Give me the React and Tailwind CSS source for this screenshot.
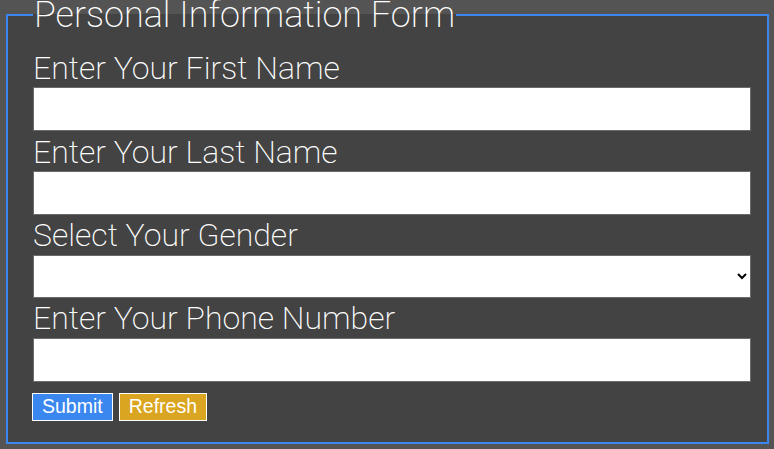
import React from 'react'

function Field({ label, children }) {
  return (
    <>
      <label className="block h-[33px] text-[32px] leading-[33px] font-extralight">{label}</label>
      {children}
    </>
  )
}

export default function App() {
  const inputCls =
    'block w-[718px] h-[44px] bg-white border border-[#6b6b6b] text-black text-base px-2 outline-none'

  return (
    <div className="h-screen w-full bg-[#545454] overflow-hidden" style={{ fontFamily: 'Roboto, "Noto Sans", sans-serif' }}>
      <fieldset className="ml-[6px] mt-[-3px] w-[763px] h-[447px] bg-[#434343] border-2 border-[#3b87f0] pl-[25px] text-white">
        <legend className="px-[1px] text-[36px] leading-[36px] font-extralight text-white">
          Personal Information Form
        </legend>
        <div className="flex flex-col pt-[19px]">
          <Field label="Enter Your First Name">
            <input type="text" className={inputCls + ' mt-[2px]'} />
          </Field>
          <div className="h-[5px]" />
          <Field label="Enter Your Last Name">
            <input type="text" className={inputCls + ' mt-[2px]'} />
          </Field>
          <div className="h-[4px]" />
          <Field label="Select Your Gender">
            <select className="block mt-[3px] w-[718px] h-[43px] bg-white border border-[#6b6b6b] text-black text-base pl-1">
              <option value=""></option>
              <option value="male">Male</option>
              <option value="female">Female</option>
            </select>
          </Field>
          <div className="h-[4px]" />
          <Field label="Enter Your Phone Number">
            <input type="tel" className={inputCls + ' mt-[3px]'} />
          </Field>
          <div className="flex gap-[6px] mt-[11px] ml-[-1px]" style={{ fontFamily: '"Liberation Sans", Arial, sans-serif' }}>
            <button className="h-[28px] px-[9px] bg-[#3b87f0] border border-white text-white text-[19.5px] leading-none">
              Submit
            </button>
            <button className="h-[28px] px-[9px] bg-[#daa520] border border-white text-white text-[19.5px] leading-none">
              Refresh
            </button>
          </div>
        </div>
      </fieldset>
    </div>
  )
}
